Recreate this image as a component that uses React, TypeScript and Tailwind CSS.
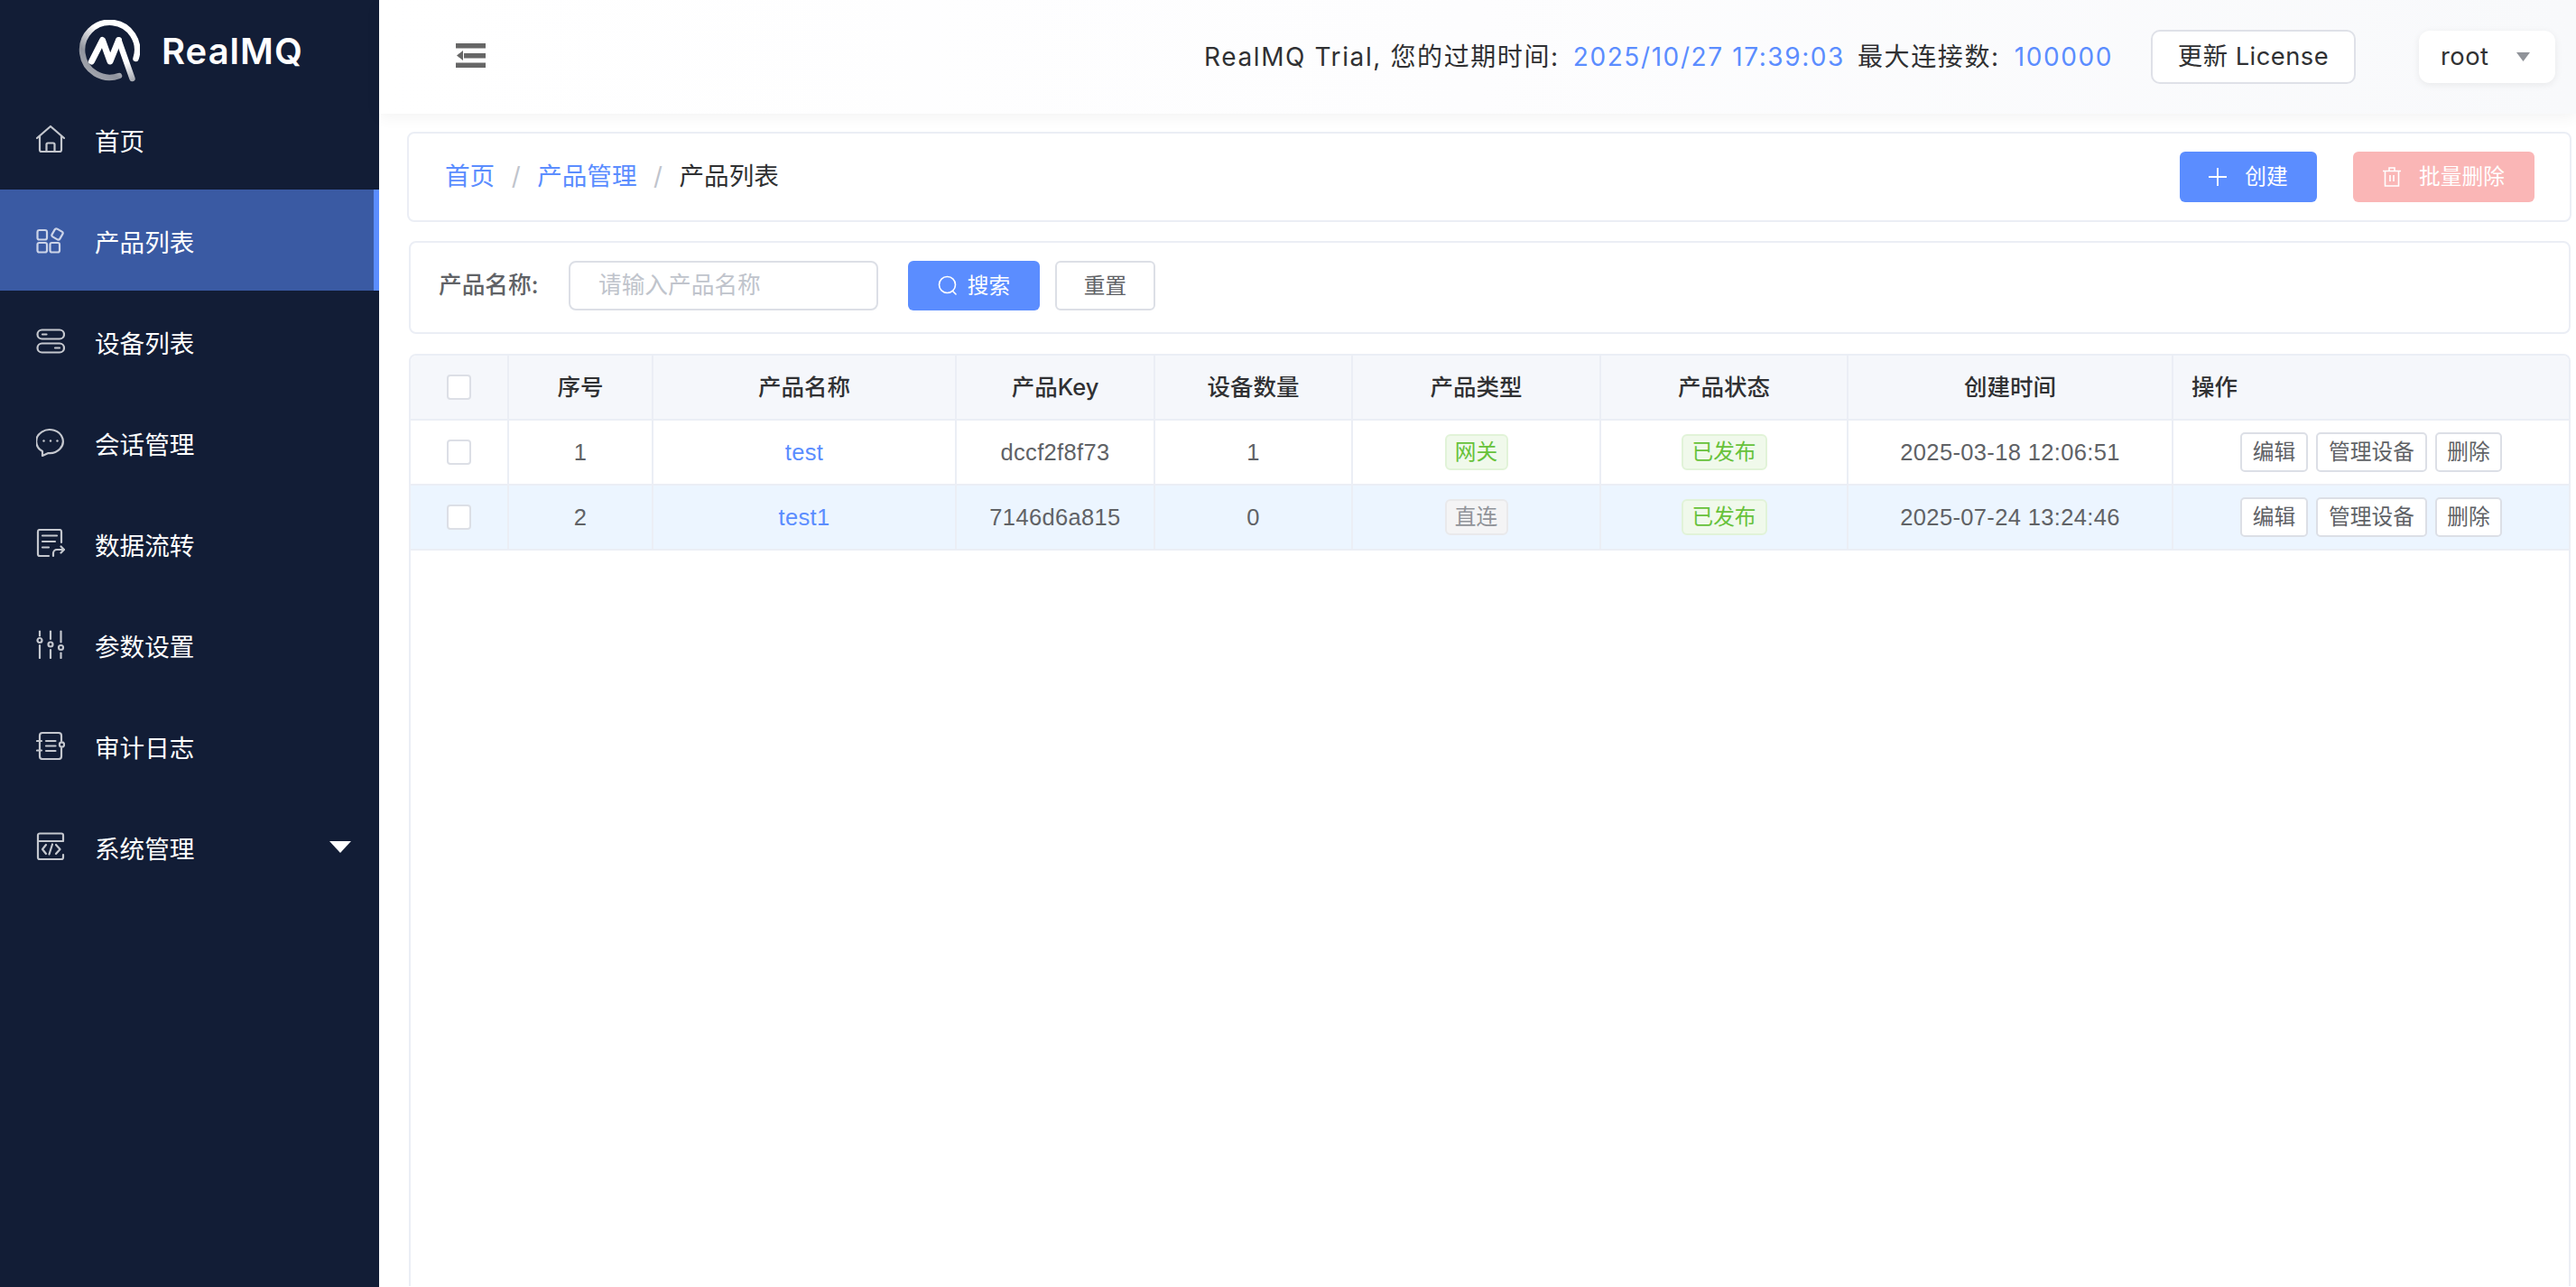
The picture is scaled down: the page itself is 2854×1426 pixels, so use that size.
import React from "react";

const Logo = () => (
  <svg width="68" height="70" viewBox="0 0 68 70" fill="none">
    <defs>
      <linearGradient id="ring" x1="55" y1="5" x2="10" y2="60" gradientUnits="userSpaceOnUse">
        <stop offset="0.35" stopColor="#ffffff" />
        <stop offset="0.75" stopColor="#8f939d" />
        <stop offset="1" stopColor="#a5a8b0" />
      </linearGradient>
      <linearGradient id="tail" x1="48" y1="40" x2="60" y2="66" gradientUnits="userSpaceOnUse">
        <stop offset="0.3" stopColor="#ffffff" />
        <stop offset="1" stopColor="#a9acb4" />
      </linearGradient>
    </defs>
    <path d="M63.5 43 A30.5 30.5 0 1 0 45 62" stroke="url(#ring)" strokeWidth="6.5" strokeLinecap="round" />
    <path d="M14.5 46 L26.5 22.5 L35 46 L44.5 22.5" stroke="#ffffff" strokeWidth="7" strokeLinecap="round" strokeLinejoin="round" />
    <path d="M44.5 22.5 L59.5 65" stroke="url(#tail)" strokeWidth="6.5" strokeLinecap="round" />
  </svg>
);

const sv = { width: 32, height: 32, viewBox: "0 0 32 32", fill: "none", stroke: "currentColor", strokeWidth: 2.2, strokeLinecap: "round" as const, strokeLinejoin: "round" as const };

const icons: Record<string, React.ReactNode> = {
  home: (
    <svg {...sv}>
      <path d="M1 15 L16 2 L31 15" />
      <path d="M4 13 V28 a2 2 0 0 0 2 2 H26 a2 2 0 0 0 2 -2 V13" />
      <path d="M11.5 30 V22 a1.5 1.5 0 0 1 1.5 -1.5 H19 a1.5 1.5 0 0 1 1.5 1.5 V30" />
    </svg>
  ),
  product: (
    <svg {...sv}>
      <rect x="1.5" y="5" width="10.5" height="10.5" rx="2" />
      <rect x="1.5" y="19" width="10.5" height="10.5" rx="2" />
      <rect x="15.5" y="19" width="10.5" height="10.5" rx="2" />
      <rect x="18.5" y="4.5" width="10" height="10" rx="2" transform="rotate(30 23.5 9.5)" />
    </svg>
  ),
  device: (
    <svg {...sv}>
      <rect x="1.5" y="3.5" width="29.5" height="10" rx="5" />
      <rect x="1.5" y="18.5" width="29.5" height="10" rx="5" />
      <path d="M7 8.5 H11.5" />
      <path d="M21 23.5 H26" />
    </svg>
  ),
  chat: (
    <svg {...sv}>
      <path d="M7 31 V26 A14.8 13 0 1 1 13.5 28 Z" />
      <circle cx="8.5" cy="14.5" r="1.2" fill="currentColor" stroke="none" />
      <circle cx="16" cy="14.5" r="1.2" fill="currentColor" stroke="none" />
      <circle cx="23.5" cy="14.5" r="1.2" fill="currentColor" stroke="none" />
    </svg>
  ),
  flow: (
    <svg {...sv}>
      <path d="M28 15 V3 a2 2 0 0 0 -2 -2 H4 a2 2 0 0 0 -2 2 V28 a2 2 0 0 0 2 2 H14" />
      <path d="M7 7.5 H23" />
      <path d="M7 14 H21" />
      <path d="M7 20.5 H14" />
      <path d="M19 30 V27 a4 4 0 0 1 4 -4 H30.5" />
      <path d="M27.5 19.5 L31 23 L27.5 26.5" />
    </svg>
  ),
  params: (
    <svg {...sv}>
      <path d="M4 1.5 V6.5" />
      <path d="M4 17 V31" />
      <path d="M16 1.5 V10" />
      <path d="M16 22 V31" />
      <path d="M27.5 1.5 V13.5" />
      <path d="M27.5 25.5 V31" />
      <circle cx="4" cy="11.5" r="2.5" />
      <circle cx="16" cy="16" r="2.5" />
      <circle cx="27.5" cy="19.5" r="2.5" />
    </svg>
  ),
  audit: (
    <svg {...sv}>
      <path d="M28 11 V5 a3 3 0 0 0 -3 -3 H7 a3 3 0 0 0 -3 3 V28 a3 3 0 0 0 3 3 H25 a3 3 0 0 0 3 -3 V19" />
      <path d="M1 11 H6" />
      <path d="M1 21.5 H6" />
      <path d="M11 11 H21.5" />
      <path d="M11 16.5 H21.5" />
      <path d="M11 22 H21.5" />
      <circle cx="28.5" cy="15" r="2.6" />
    </svg>
  ),
  system: (
    <svg {...sv}>
      <path d="M30 9.5 V3.5 a2 2 0 0 0 -2 -2 H4 a2 2 0 0 0 -2 2 V28 a2 2 0 0 0 2 2 H28 a2 2 0 0 0 2 -2 V25" />
      <path d="M2 10 H30" />
      <path d="M11 14 L7 19 L11 24" />
      <path d="M18 13.5 L14.5 24.5" />
      <path d="M22 14 L26.5 19 L22 24" />
    </svg>
  ),
};

const menu = [
  ["home", "首页"],
  ["product", "产品列表"],
  ["device", "设备列表"],
  ["chat", "会话管理"],
  ["flow", "数据流转"],
  ["params", "参数设置"],
  ["audit", "审计日志"],
  ["system", "系统管理"],
];

const Sidebar = () => (
  <aside className="w-[420px] h-full shrink-0 bg-[#121d36] text-white">
    <div className="h-[98px] flex items-center pl-[87px] pt-[16px]">
      <Logo />
      <span className="ml-[24px] text-[40px] font-semibold tracking-[1px] leading-none">RealMQ</span>
    </div>
    {menu.map(([k, t], i) => (
      <div key={k} className={`h-[112px] flex items-center pl-[40px] relative ${i === 1 ? "bg-[#3a5aa3] border-r-[6px] border-[#5b8dff]" : ""}`}>
        <span className={i === 1 ? "text-[#ccd4e8]" : "text-[#c4c7ce]"}>{icons[k]}</span>
        <span className="ml-[33px] text-[27.6px] leading-none pt-[8px] text-white">{t}</span>
        {i === 7 && (
          <svg className="ml-auto mr-[31px]" width="24" height="13" viewBox="0 0 24 13">
            <path d="M0 0 H24 L12 13 Z" fill="#fff" />
          </svg>
        )}
      </div>
    ))}
  </aside>
);

const Header = () => (
  <header className="h-[126px] shrink-0 relative z-10 flex items-center pl-[85px] pr-[23px] bg-gradient-to-r from-white via-[#fdfdfe] to-[#f8f9fb] shadow-[0_4px_16px_rgba(0,0,0,0.05)]">
    <svg className="mb-[3px]" width="33" height="27" viewBox="0 0 33 27" fill="#666">
      <rect width="33" height="5.5" />
      <rect x="9" y="11" width="24" height="5.5" />
      <rect y="21.5" width="33" height="5.5" />
      <path d="M8 8 V19 L1 13.5 Z" />
    </svg>
    <div className="ml-auto flex items-center text-[28px] tracking-[1.6px] text-[#303133]">
      <span>RealMQ Trial, 您的过期时间:</span>
      <span className="ml-[15px] text-[#5b8dff]">2025/10/27 17:39:03</span>
      <span className="ml-[14px]">最大连接数:</span>
      <span className="ml-[16px] text-[#5b8dff]">100000</span>
    </div>
    <button className="ml-[42px] w-[227px] h-[60px] rounded-[10px] border-2 border-[#dfe1e8] bg-white text-[27.3px] tracking-[0.5px] text-[#303133]">更新 License</button>
    <div className="ml-[70px] w-[151px] h-[58px] rounded-[12px] bg-white shadow-[0_2px_8px_rgba(0,0,0,0.07)] flex items-center pl-[24px] text-[27.3px] tracking-[0.5px] text-[#303133]">
      <span>root</span>
      <svg className="ml-[30px]" width="15" height="10" viewBox="0 0 15 10"><path d="M0 0 H15 L7.5 10 Z" fill="#909399" /></svg>
    </div>
  </header>
);

const Breadcrumb = () => (
  <div className="ml-[31px] mt-[20px] w-[2398px] h-[100px] shrink-0 bg-white border-2 border-[#ebeef5] rounded-[8px] flex items-center pl-[40px] pr-[39px] text-[27.6px]">
    <span className="text-[#5b8dff]">首页</span>
    <span className="mx-[18.5px] text-[#c0c4cc]">/</span>
    <span className="text-[#5b8dff]">产品管理</span>
    <span className="mx-[18.5px] text-[#c0c4cc]">/</span>
    <span className="text-[#303133]">产品列表</span>
    <button className="ml-auto w-[152px] h-[56px] rounded-[6px] bg-[#5b8dff] text-white text-[23.7px] flex items-center justify-center">
      <svg className="mr-[20px]" width="20" height="20" viewBox="0 0 20 20" stroke="#fff" strokeWidth="1.8"><path d="M10 0 V20 M0 10 H20" /></svg>
      创建
    </button>
    <button className="ml-[40px] w-[201px] h-[56px] rounded-[6px] bg-[#fab6b6] text-white text-[23.7px] flex items-center justify-center">
      <svg className="mr-[20px]" width="20" height="22" viewBox="0 0 20 22" fill="none" stroke="#fff" strokeWidth="1.6"><path d="M0 4.5 H20 M7 4 V1 H13 V4 M2.5 4.5 V21 H17.5 V4.5 M8 9 V16 M12 9 V16" /></svg>
      批量删除
    </button>
  </div>
);

const SearchBar = () => (
  <div className="ml-[33px] mt-[21px] w-[2395px] h-[103px] shrink-0 bg-white border-2 border-[#ebeef5] rounded-[8px] flex items-center pl-[31px] pb-[4px] text-[23.7px]">
    <span className="w-[144px] shrink-0 text-[25.7px] font-medium text-[#606266] whitespace-nowrap">产品名称:</span>
    <div className="w-[343px] h-[55px] border-2 border-[#dcdfe6] rounded-[8px] flex items-center pl-[31px] text-[25.7px] text-[#c0c4cc]">请输入产品名称</div>
    <button className="ml-[33px] w-[146px] h-[55px] rounded-[6px] bg-[#5b8dff] text-white flex items-center justify-center">
      <svg className="mr-[11px]" width="22" height="24" viewBox="0 0 22 24" fill="none" stroke="#fff" strokeWidth="1.6" strokeLinecap="round"><circle cx="10.5" cy="10.5" r="9" /><path d="M16.5 17.5 L20 21" /></svg>
      搜索
    </button>
    <button className="ml-[17px] w-[111px] h-[55px] rounded-[6px] border-2 border-[#dcdfe6] bg-white text-[#606266]">重置</button>
  </div>
);

const cols = "grid grid-cols-[109px_160px_336px_220px_219px_275px_274px_360px_438px]";
const headCell = "flex items-center justify-center border-r-2 border-[#ebeef5]";
const cell = "flex items-center justify-center border-r-2 border-[#ebeef5]";
const dataCell = "flex items-center justify-center border-r-2 border-[#ebeef5] font-['Liberation_Sans',sans-serif] tracking-[0.35px]";

const Check = () => <span className="block w-[27px] h-[28px] rounded-[4px] border-2 border-[#dcdfe6] bg-white" />;

const Tag = ({ kind, w, children }: { kind: "green" | "gray"; w: string; children: React.ReactNode }) => (
  <span className={`${w} h-[40px] rounded-[6px] border-2 flex items-center justify-center text-[23.7px] ${kind === "green" ? "bg-[#f0f9eb] border-[#e1f3d8] text-[#67c23a]" : "bg-[#f4f4f5] border-[#e9e9eb] text-[#909399]"}`}>{children}</span>
);

const OpBtn = ({ w, children }: { w: string; children: React.ReactNode }) => (
  <button className={`${w} h-[44px] rounded-[5px] border-2 border-[#dcdfe6] bg-white text-[23.7px] text-[#606266]`}>{children}</button>
);

const rows = [
  { n: "1", name: "test", key: "dccf2f8f73", count: "1", type: "网关", kind: "green" as const, time: "2025-03-18 12:06:51", bg: "bg-white" },
  { n: "2", name: "test1", key: "7146d6a815", count: "0", type: "直连", kind: "gray" as const, time: "2025-07-24 13:24:46", bg: "bg-[#ecf5ff]" },
];

const Table = () => (
  <div className="ml-[33px] mt-[22px] w-[2395px] flex-1 bg-white border-2 border-b-0 border-[#ebeef5] rounded-t-[8px] overflow-hidden mb-[1px]">
    <div className={`${cols} h-[72px] bg-[#f5f7fb] border-b-2 border-[#ebeef5] text-[25.5px] font-medium text-[#303133]`}>
      <div className={headCell}><Check /></div>
      <div className={headCell}>序号</div>
      <div className={headCell}>产品名称</div>
      <div className={headCell}>产品Key</div>
      <div className={headCell}>设备数量</div>
      <div className={headCell}>产品类型</div>
      <div className={headCell}>产品状态</div>
      <div className={headCell}>创建时间</div>
      <div className="flex items-center pl-[20px]">操作</div>
    </div>
    {rows.map((r) => (
      <div key={r.n} className={`${cols} h-[72px] ${r.bg} border-b-2 border-[#ebeef5] text-[25.5px] text-[#606266]`}>
        <div className={cell}><Check /></div>
        <div className={dataCell}>{r.n}</div>
        <div className={`${dataCell} text-[#5b8dff]`}>{r.name}</div>
        <div className={dataCell}>{r.key}</div>
        <div className={dataCell}>{r.count}</div>
        <div className={cell}><Tag kind={r.kind} w="w-[70px]">{r.type}</Tag></div>
        <div className={cell}><Tag kind="green" w="w-[95px]">已发布</Tag></div>
        <div className={dataCell}>{r.time}</div>
        <div className="flex items-center justify-center gap-[9px]">
          <OpBtn w="w-[75px]">编辑</OpBtn>
          <OpBtn w="w-[123px]">管理设备</OpBtn>
          <OpBtn w="w-[74px]">删除</OpBtn>
        </div>
      </div>
    ))}
  </div>
);

export default function App() {
  return (
    <div className="w-[2854px] h-[1426px] flex overflow-hidden bg-white font-['Inter','Noto_Sans_CJK_SC',sans-serif]">
      <Sidebar />
      <main className="flex-1 min-w-0 flex flex-col">
        <Header />
        <Breadcrumb />
        <SearchBar />
        <Table />
      </main>
    </div>
  );
}
